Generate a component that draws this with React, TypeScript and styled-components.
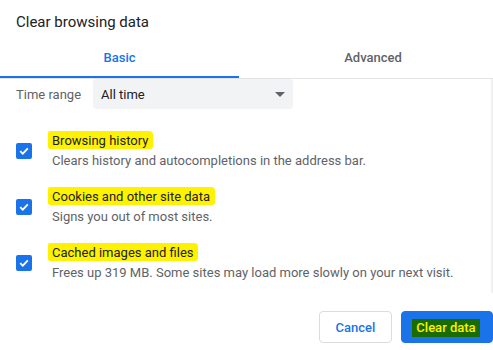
import * as React from 'react';
import styled, { createGlobalStyle } from 'styled-components';

const Global = createGlobalStyle`
  body {
    margin: 0;
    background: #fff;
    font-family: Roboto, "Liberation Sans", Arial, sans-serif;
  }
`;

const Dialog = styled.div`
  width: 493px;
  height: 350px;
  display: flex;
  flex-direction: column;
  background: #fff;
`;

const Title = styled.div`
  padding: 12px 16px 0;
  font-size: 15px;
  line-height: 20px;
  color: #202124;
`;

const Tabs = styled.div`
  display: flex;
  border-bottom: 1px solid #e3e3e3;
`;

const Tab = styled.div<{ $active?: boolean; $shift?: number }>`
  flex: ${(p) => (p.$active ? '0 0 239px' : '1')};
  padding: 16px 0 8px ${(p) => p.$shift || 0}px;
  text-align: center;
  font-size: 13px;
  font-weight: 500;
  line-height: 20px;
  color: ${(p) => (p.$active ? '#1a73e8' : '#5f6368')};
  border-bottom: 2px solid ${(p) => (p.$active ? '#1a73e8' : 'transparent')};
`;

const Body = styled.div`
  height: 214px;
  padding: 0 14px 0 16px;
  border-right: 2px solid #f1f1f1;
  display: flex;
  flex-direction: column;
`;

const TimeRow = styled.div`
  display: flex;
  align-items: center;
  height: 30px;
  margin-bottom: 22px;
`;

const TimeLabel = styled.div`
  width: 77px;
  font-size: 13px;
  color: #5f6368;
`;

const Select = styled.div`
  position: relative;
  width: 192px;
  height: 30px;
  padding-left: 8px;
  display: flex;
  align-items: center;
  border-radius: 4px;
  background: #f1f3f4;
  font-size: 13px;
  color: #202124;
`;

const Arrow = styled.span`
  position: absolute;
  right: 8px;
  top: 13px;
  width: 0;
  height: 0;
  border-left: 5px solid transparent;
  border-right: 5px solid transparent;
  border-top: 5px solid #5f6368;
`;

const Items = styled.div`
  display: flex;
  flex-direction: column;
  gap: 16px;
`;

const Item = styled.div`
  display: flex;
  align-items: center;
  gap: 20px;
`;

const Box = styled.span`
  flex: 0 0 16px;
  height: 16px;
  border-radius: 2px;
  background: #1a73e8;
  display: flex;
  align-items: center;
  justify-content: center;
`;

const Texts = styled.div`
  display: flex;
  flex-direction: column;
  font-size: 13px;
  line-height: 20px;
`;

const Label = styled.div`
  color: #202124;
`;

const Marker = styled.span`
  background: #fff200;
  margin-left: -4px;
  padding: 2px 5px 1px 4px;
  border-radius: 2px 4px 3px 2px;
`;

const Desc = styled.div`
  color: #5f6368;
`;

const Footer = styled.div`
  display: flex;
  justify-content: flex-end;
  gap: 9px;
  padding-top: 18px;
`;

const Button = styled.button<{ $primary?: boolean }>`
  height: 32px;
  padding: 0;
  width: ${(p) => (p.$primary ? '92px' : '73px')};
  border-radius: 4px;
  border: 1px solid ${(p) => (p.$primary ? '#1a73e8' : '#dadce0')};
  background: ${(p) => (p.$primary ? '#1a73e8' : '#fff')};
  color: #1a73e8;
  font-family: Roboto, "Liberation Sans", Arial, sans-serif;
  font-size: 13px;
  font-weight: 500;
`;

const DarkMarker = styled.span`
  background: #1a6c00;
  color: #fff000;
  padding: 1px 4px 2px;
  margin-right: 2px;
`;

const Check = () => (
  <svg width="12" height="12" viewBox="0 0 12 12">
    <path d="M2.2 6.2 L4.8 8.7 L9.8 3.4" fill="none" stroke="#fff" strokeWidth="1.8" />
  </svg>
);

const items = [
  ['Browsing history', 'Clears history and autocompletions in the address bar.'],
  ['Cookies and other site data', 'Signs you out of most sites.'],
  ['Cached images and files', 'Frees up 319 MB. Some sites may load more slowly on your next visit.'],
];

export default function App() {
  return (
    <Dialog>
      <Global />
      <Title>Clear browsing data</Title>
      <Tabs>
        <Tab $active>Basic</Tab>
        <Tab $shift={14}>Advanced</Tab>
      </Tabs>
      <Body>
        <TimeRow>
          <TimeLabel>Time range</TimeLabel>
          <Select>
            All time
            <Arrow />
          </Select>
        </TimeRow>
        <Items>
          {items.map(([label, desc]) => (
            <Item key={label}>
              <Box>
                <Check />
              </Box>
              <Texts>
                <Label>
                  <Marker>{label}</Marker>
                </Label>
                <Desc>{desc}</Desc>
              </Texts>
            </Item>
          ))}
        </Items>
      </Body>
      <Footer>
        <Button>Cancel</Button>
        <Button $primary>
          <DarkMarker>Clear data</DarkMarker>
        </Button>
      </Footer>
    </Dialog>
  );
}
